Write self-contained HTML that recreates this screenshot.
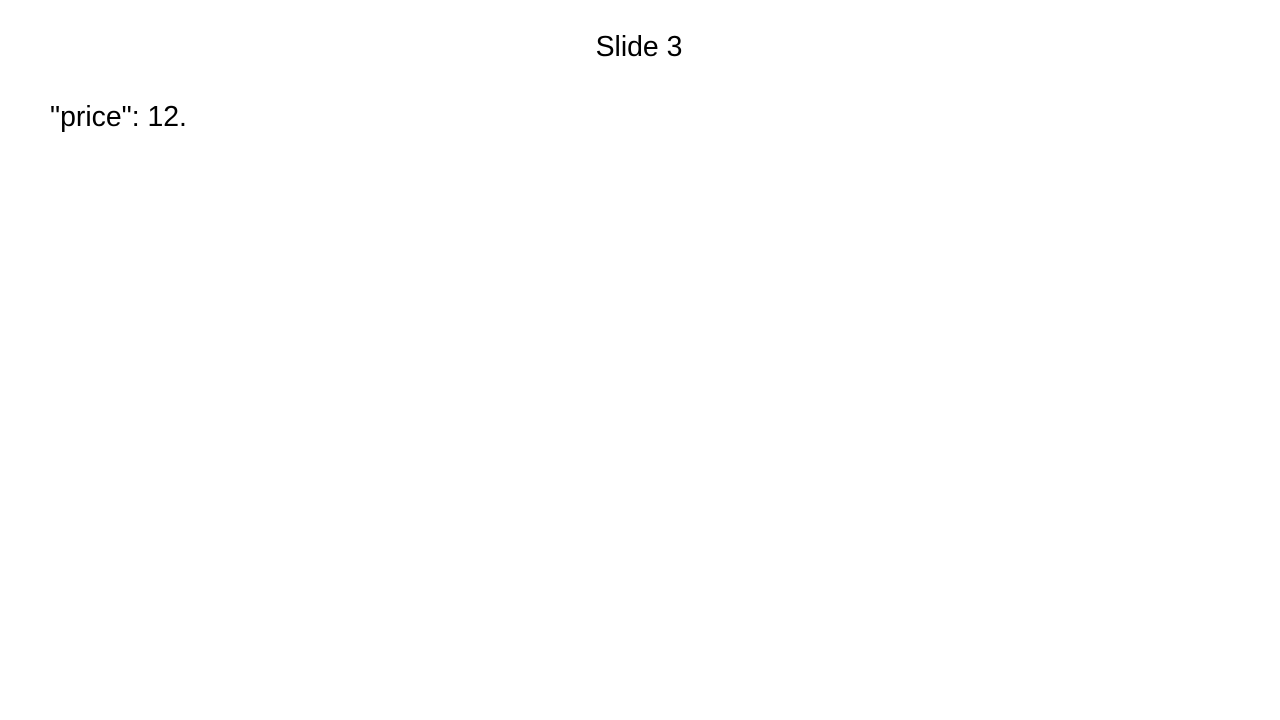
<!DOCTYPE html>
<html><head><meta charset="utf-8"><style>
html,body{margin:0;padding:0;background:#fff;width:1280px;height:720px;overflow:hidden;font-family:"Liberation Sans",Arial,sans-serif;color:#000}
.t{position:absolute;top:31px;left:0;width:1278px;text-align:center;font-size:28.4px;line-height:32px}
.b{position:absolute;top:101px;left:50px;font-size:28.4px;line-height:32px}
</style></head><body>
<div class="t">Slide 3</div>
<div class="b">"price": 12.</div>
</body></html>
